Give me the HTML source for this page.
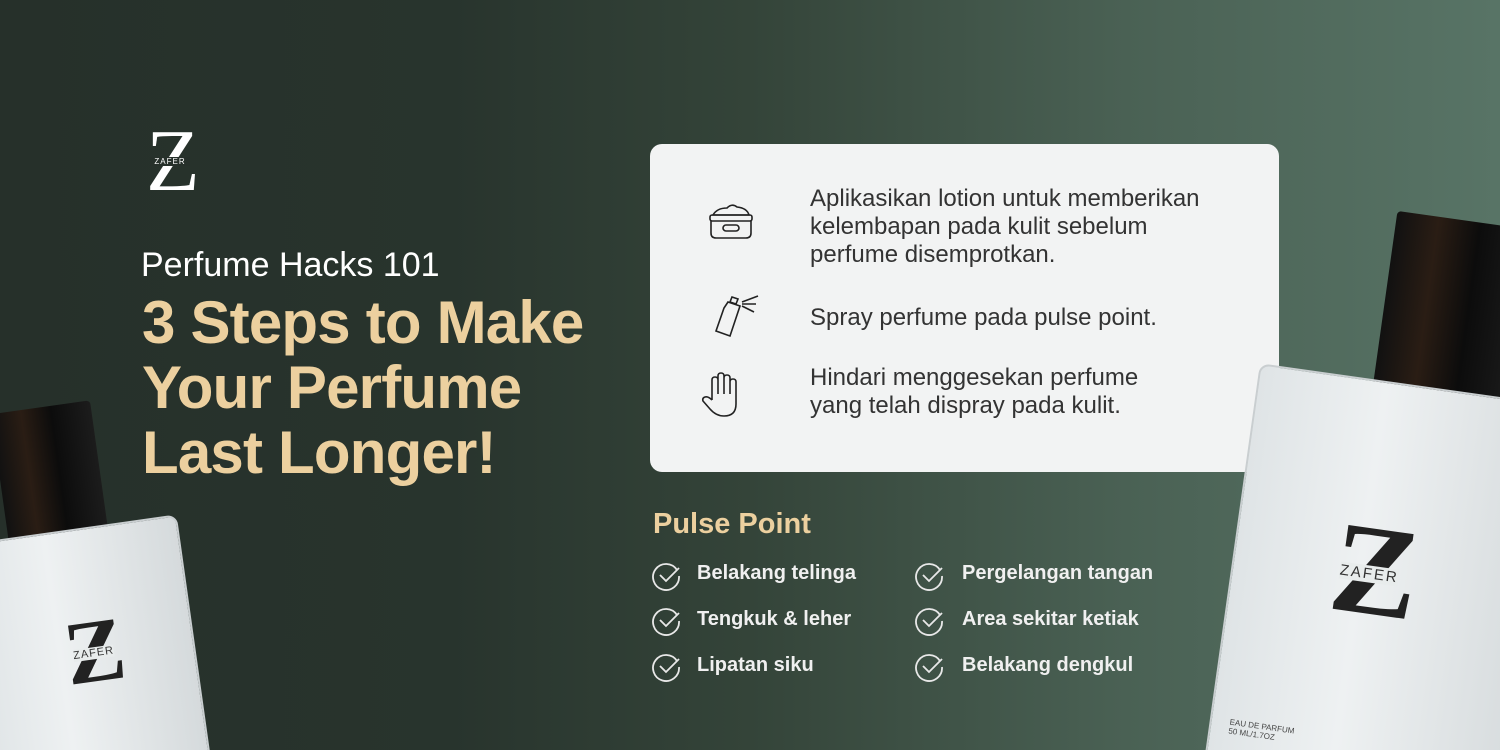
<!DOCTYPE html>
<html style="width:1500px;height:750px;overflow:hidden"><head><meta charset="utf-8"><style>
*{margin:0;padding:0;box-sizing:border-box}
body{width:1500px;height:750px;overflow:hidden;position:relative;font-family:"Liberation Sans",sans-serif;
background:linear-gradient(90deg,#26302a 0%,#28342d 30%,#344439 50%,#4a6154 75%,#587466 100%);}
.abs{position:absolute}
.h1{left:141px;top:246px;color:#fff;font-size:34px}
.h2{left:142px;top:290px;color:#ecd09f;font-size:60px;font-weight:bold;line-height:65px;letter-spacing:-0.8px}
.card{left:650px;top:144px;width:629px;height:328px;background:#f2f3f3;border-radius:12px}
.t{color:#333;font-size:24px;line-height:28px;left:810px}
.pp{left:653px;top:508px;color:#ecd09f;font-size:29px;font-weight:bold}
.li{color:#f0f0f0;font-size:20px;font-weight:bold}
.bottle{background:linear-gradient(90deg,#dfe4e6,#eef1f2 40%,#d5dadc);border:2px solid #c9ced0;border-radius:10px}
.cap{background:linear-gradient(90deg,#111,#2a1d14 30%,#0c0c0c 60%,#1c1c1c);border-radius:4px}
.z{font-family:"Liberation Serif",serif;color:#222;font-weight:bold}
</style></head><body>
<div class="abs" style="left:146px;top:122px;width:44px;height:76px;color:#fff;font-family:'Liberation Serif',serif;font-size:88px;line-height:80px;text-align:center;">Z</div>
<div class="abs" style="left:150px;top:157px;width:40px;font-size:8px;color:#fff;text-align:center;background:#26302a;letter-spacing:1px">ZAFER</div>
<div class="abs h1">Perfume Hacks 101</div>
<div class="abs h2">3 Steps to Make<br>Your Perfume<br>Last Longer!</div>

<div class="abs card"></div>
<svg class="abs" style="left:705px;top:200px" width="52" height="45" viewBox="0 0 52 45" fill="none" stroke="#222" stroke-width="1.6"><path d="M8 15 Q12 8 22 8 Q27 3 32 7 Q42 8 44 15 Z"/><rect x="5" y="15" width="42" height="6" rx="2"/><path d="M6 21 V33 Q6 38 11 38 H41 Q46 38 46 33 V21"/><rect x="18" y="25" width="16" height="6" rx="3"/></svg>
<svg class="abs" style="left:710px;top:290px" width="55" height="50" viewBox="0 0 55 50" fill="none" stroke="#222" stroke-width="1.6"><path d="M22 7 L28 9 L26 14 L20 12 Z"/><path d="M18 12 L30 16 L20 46 L6 41 L14 18 Z"/><path d="M32 12 L48 6 M32 14 L46 14 M32 16 L44 22"/></svg>
<svg class="abs" style="left:700px;top:372px" width="45" height="48" viewBox="0 0 45 48" fill="none" stroke="#222" stroke-width="1.6"><path d="M12 28 V8 Q12 5 15 5 Q18 5 18 8 V22 M18 22 V4 Q18 1 21 1 Q24 1 24 4 V22 M24 22 V6 Q24 3 27 3 Q30 3 30 6 V22 M30 22 V10 Q30 7 33 7 Q36 7 36 10 V32 Q36 44 24 44 Q16 44 10 37 L3 29 Q2 26 5 25 Q8 24 12 28"/></svg>
<div class="abs t" style="top:185px">Aplikasikan lotion untuk memberikan<br>kelembapan pada kulit sebelum<br>perfume disemprotkan.</div>
<div class="abs t" style="top:304px">Spray perfume pada pulse point.</div>
<div class="abs t" style="top:364px">Hindari menggesekan perfume<br>yang telah dispray pada kulit.</div>

<div class="abs pp">Pulse Point</div>
<svg width="0" height="0" style="position:absolute"><defs><g id="ck" fill="none" stroke="#e8e8e8" stroke-width="1.8"><path d="M26 10 A13 13 0 1 0 28 16"/><path d="M9 15 L15 21 L28 8"/></g></defs></svg>
<svg class="abs" style="left:651px;top:560px" width="32" height="32"><use href="#ck"/></svg>
<svg class="abs" style="left:651px;top:605px" width="32" height="32"><use href="#ck"/></svg>
<svg class="abs" style="left:651px;top:651px" width="32" height="32"><use href="#ck"/></svg>
<svg class="abs" style="left:914px;top:560px" width="32" height="32"><use href="#ck"/></svg>
<svg class="abs" style="left:914px;top:605px" width="32" height="32"><use href="#ck"/></svg>
<svg class="abs" style="left:914px;top:651px" width="32" height="32"><use href="#ck"/></svg>
<div class="abs li" style="left:697px;top:562px">Belakang telinga</div>
<div class="abs li" style="left:697px;top:608px">Tengkuk &amp; leher</div>
<div class="abs li" style="left:697px;top:654px">Lipatan siku</div>
<div class="abs li" style="left:962px;top:562px">Pergelangan tangan</div>
<div class="abs li" style="left:962px;top:608px">Area sekitar ketiak</div>
<div class="abs li" style="left:962px;top:654px">Belakang dengkul</div>

<div class="abs" style="left:0;top:0;width:1500px;height:750px;overflow:hidden;contain:paint">
<div class="abs" style="left:-65px;top:412px;width:260px;height:400px;transform:rotate(-8deg);transform-origin:0 0">
 <div class="abs cap" style="left:55px;top:10px;width:100px;height:130px"></div>
 <div class="abs bottle" style="left:0;top:135px;width:225px;height:300px"></div>
 <div class="abs z" style="left:95px;top:215px;font-size:90px;line-height:90px">Z</div>
 <div class="abs" style="left:103px;top:255px;font-size:11px;color:#333;background:#e8ecec;letter-spacing:1px">ZAFER</div>
</div>
<div class="abs" style="left:1285px;top:185px;width:320px;height:620px;transform:rotate(8deg);transform-origin:0 0">
 <div class="abs cap" style="left:115px;top:10px;width:140px;height:175px"></div>
 <div class="abs bottle" style="left:0;top:180px;width:320px;height:440px"></div>
 <div class="abs z" style="left:100px;top:305px;font-size:130px;line-height:130px">Z</div>
 <div class="abs" style="left:108px;top:365px;font-size:15px;color:#333;background:#e8ecec;letter-spacing:2px">ZAFER</div>
 <div class="abs" style="left:20px;top:535px;font-size:8px;color:#444;line-height:9px">EAU DE PARFUM<br>50 ML/1.7OZ</div>
</div>
</div>
</body></html>
